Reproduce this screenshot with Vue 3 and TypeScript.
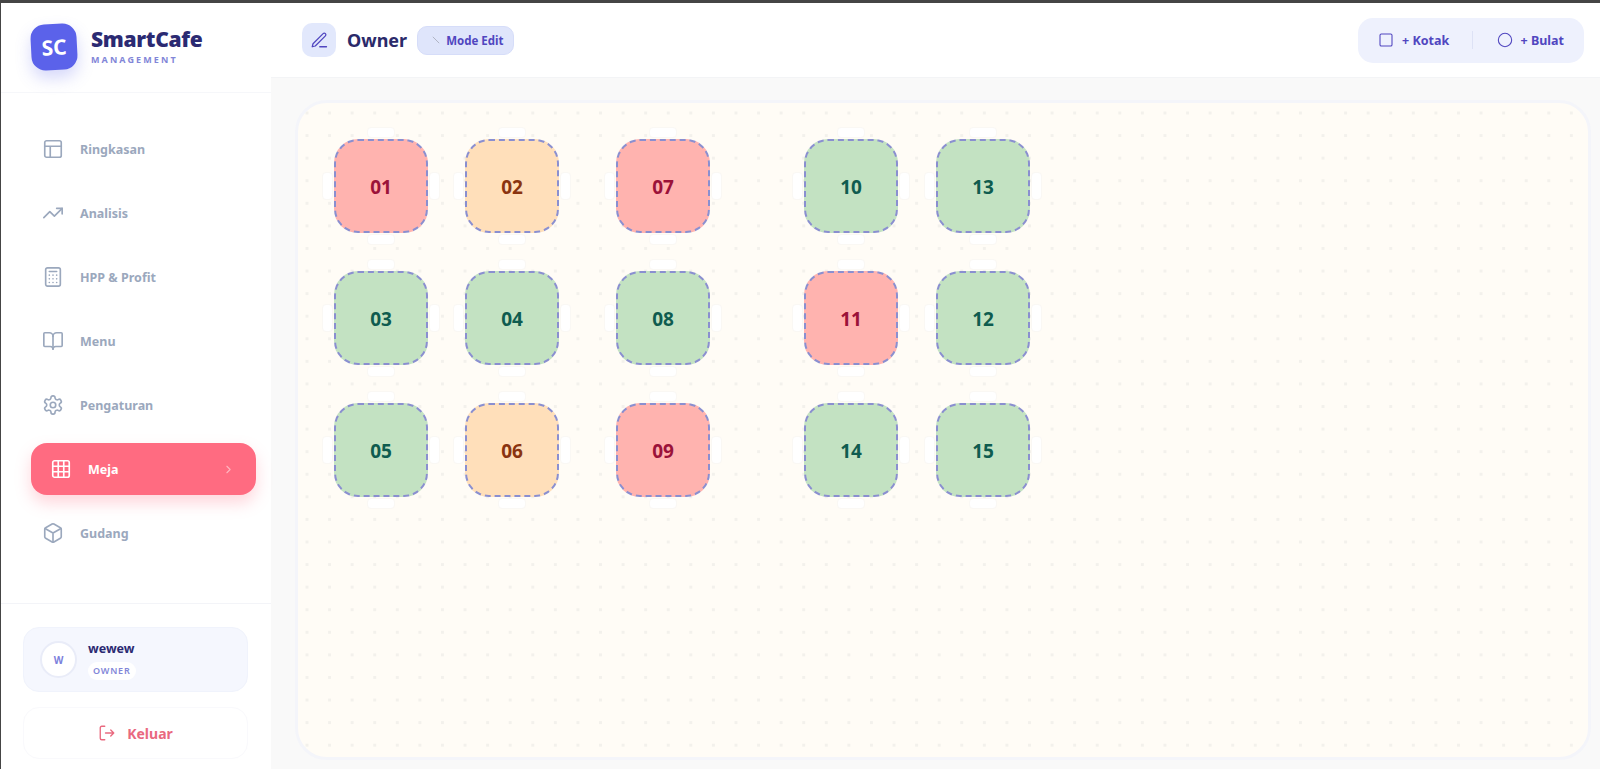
<script setup lang="ts">
type Status = 'busy' | 'held' | 'free'

interface CafeTable {
  id: string
  x: number
  y: number
  status: Status
}

const navItems = ['Ringkasan', 'Analisis', 'HPP & Profit', 'Menu', 'Pengaturan', 'Meja', 'Gudang']

const cols = [36, 167, 318, 506, 638]
const rows = [36, 168, 300]

const tables: CafeTable[] = [
  { id: '01', x: cols[0], y: rows[0], status: 'busy' },
  { id: '02', x: cols[1], y: rows[0], status: 'held' },
  { id: '07', x: cols[2], y: rows[0], status: 'busy' },
  { id: '10', x: cols[3], y: rows[0], status: 'free' },
  { id: '13', x: cols[4], y: rows[0], status: 'free' },
  { id: '03', x: cols[0], y: rows[1], status: 'free' },
  { id: '04', x: cols[1], y: rows[1], status: 'free' },
  { id: '08', x: cols[2], y: rows[1], status: 'free' },
  { id: '11', x: cols[3], y: rows[1], status: 'busy' },
  { id: '12', x: cols[4], y: rows[1], status: 'free' },
  { id: '05', x: cols[0], y: rows[2], status: 'free' },
  { id: '06', x: cols[1], y: rows[2], status: 'held' },
  { id: '09', x: cols[2], y: rows[2], status: 'busy' },
  { id: '14', x: cols[3], y: rows[2], status: 'free' },
  { id: '15', x: cols[4], y: rows[2], status: 'free' },
]
</script>

<template>
  <div class="app">
    <aside class="sidebar">
      <div class="brand">
        <div class="logo">SC</div>
        <div class="brand-text">
          <div class="brand-name">SmartCafe</div>
          <div class="brand-sub">MANAGEMENT</div>
        </div>
      </div>

      <nav class="nav">
        <a
          v-for="item in navItems"
          :key="item"
          class="nav-item"
          :class="{ active: item === 'Meja' }"
        >
          <svg class="nav-icon" viewBox="0 0 24 24">
            <template v-if="item === 'Ringkasan'">
              <rect x="3" y="3" width="18" height="18" rx="2" />
              <path d="M3 9h18M9 21V9" />
            </template>
            <template v-else-if="item === 'Analisis'">
              <path d="M22 7l-8.5 8.5-5-5L2 17" />
              <path d="M16 7h6v6" />
            </template>
            <template v-else-if="item === 'HPP & Profit'">
              <rect x="4" y="2" width="16" height="20" rx="2" />
              <path d="M8 6h8M8 10h.01M12 10h.01M16 10h.01M8 14h.01M12 14h.01M16 14h.01M8 18h.01M12 18h.01M16 18h.01" />
            </template>
            <template v-else-if="item === 'Menu'">
              <path d="M12 7v14" />
              <path d="M3 18a1 1 0 0 1-1-1V4a1 1 0 0 1 1-1h5a4 4 0 0 1 4 4 4 4 0 0 1 4-4h5a1 1 0 0 1 1 1v13a1 1 0 0 1-1 1h-6a3 3 0 0 0-3 3 3 3 0 0 0-3-3z" />
            </template>
            <template v-else-if="item === 'Pengaturan'">
              <path d="M12.22 2h-.44a2 2 0 0 0-2 2v.18a2 2 0 0 1-1 1.73l-.43.25a2 2 0 0 1-2 0l-.15-.08a2 2 0 0 0-2.73.73l-.22.38a2 2 0 0 0 .73 2.73l.15.1a2 2 0 0 1 1 1.72v.51a2 2 0 0 1-1 1.74l-.15.09a2 2 0 0 0-.73 2.73l.22.38a2 2 0 0 0 2.73.73l.15-.08a2 2 0 0 1 2 0l.43.25a2 2 0 0 1 1 1.73V20a2 2 0 0 0 2 2h.44a2 2 0 0 0 2-2v-.18a2 2 0 0 1 1-1.73l.43-.25a2 2 0 0 1 2 0l.15.08a2 2 0 0 0 2.73-.73l.22-.39a2 2 0 0 0-.73-2.73l-.15-.08a2 2 0 0 1-1-1.74v-.5a2 2 0 0 1 1-1.74l.15-.09a2 2 0 0 0 .73-2.73l-.22-.38a2 2 0 0 0-2.73-.73l-.15.08a2 2 0 0 1-2 0l-.43-.25a2 2 0 0 1-1-1.73V4a2 2 0 0 0-2-2z" />
              <circle cx="12" cy="12" r="3" />
            </template>
            <template v-else-if="item === 'Meja'">
              <rect x="3" y="3" width="18" height="18" rx="2" />
              <path d="M3 9h18M3 15h18M9 3v18M15 3v18" />
            </template>
            <template v-else>
              <path d="M21 8a2 2 0 0 0-1-1.73l-7-4a2 2 0 0 0-2 0l-7 4A2 2 0 0 0 3 8v8a2 2 0 0 0 1 1.73l7 4a2 2 0 0 0 2 0l7-4A2 2 0 0 0 21 16z" />
              <path d="M3.3 7l8.7 5 8.7-5M12 22V12" />
            </template>
          </svg>
          <span>{{ item }}</span>
          <svg v-if="item === 'Meja'" class="chevron" viewBox="0 0 24 24"><path d="M9 6l6 6-6 6" /></svg>
        </a>
      </nav>

      <div class="account">
        <div class="user-card">
          <div class="avatar">W</div>
          <div>
            <div class="user-name">wewew</div>
            <span class="user-role">OWNER</span>
          </div>
        </div>
        <button class="logout">
          <svg viewBox="0 0 24 24">
            <path d="M9 3H5a2 2 0 0 0-2 2v14a2 2 0 0 0 2 2h4" />
            <path d="M10 12h11M17 8l4 4-4 4" />
          </svg>
          Keluar
        </button>
      </div>
    </aside>

    <main class="main">
      <header class="topbar">
        <div class="title-box">
          <svg viewBox="0 0 24 24">
            <path d="M13 21h9" />
            <path d="M17.5 3.5a2.1 2.1 0 0 1 3 3L7 20l-4 1 1-4z" />
          </svg>
        </div>
        <h1 class="title">Owner</h1>
        <div class="mode-badge">
          <svg viewBox="0 0 24 24"><path d="M5 5l14 14" /></svg>
          Mode Edit
        </div>
        <div class="tools">
          <button class="tool">
            <svg viewBox="0 0 24 24"><rect x="3" y="3" width="18" height="18" rx="2" /></svg>
            + Kotak
          </button>
          <span class="tool-sep"></span>
          <button class="tool">
            <svg viewBox="0 0 24 24"><circle cx="12" cy="12" r="10" /></svg>
            + Bulat
          </button>
        </div>
      </header>

      <div class="canvas-wrap">
        <section class="canvas">
          <div
            v-for="t in tables"
            :key="t.id"
            class="table"
            :class="t.status"
            :style="{ left: t.x + 'px', top: t.y + 'px' }"
          >
            <i class="chair top"></i>
            <i class="chair bottom"></i>
            <i class="chair left"></i>
            <i class="chair right"></i>
            {{ t.id }}
          </div>
        </section>
      </div>
    </main>
  </div>
</template>

<style scoped>
.app {
  display: flex;
  height: 769px;
  box-sizing: border-box;
  border-top: 3px solid #454545;
  border-left: 1px solid #454545;
  background: #f9f9f9;
  font-family: "Noto Sans", "Open Sans", sans-serif;
  overflow: hidden;
}

svg {
  fill: none;
  stroke: currentColor;
  stroke-width: 2;
  stroke-linecap: round;
  stroke-linejoin: round;
  flex: none;
}

.sidebar {
  width: 270px;
  flex: none;
  display: flex;
  flex-direction: column;
  background: #fff;
}

.brand {
  height: 90px;
  box-sizing: border-box;
  padding: 21px 0 0 30px;
  display: flex;
  gap: 14px;
  border-bottom: 1px solid #f6f7fa;
}

.logo {
  width: 46px;
  height: 46px;
  border-radius: 14px;
  background: #5b62ea;
  color: #fff;
  font-size: 21px;
  font-weight: 700;
  display: flex;
  align-items: center;
  justify-content: center;
  transform: rotate(-3deg);
  box-shadow: 0 8px 16px rgba(91, 98, 234, 0.25);
}

.brand-name {
  margin-top: 1px;
  font-size: 21px;
  line-height: 28px;
  font-weight: 900;
  letter-spacing: -0.3px;
  color: #2b2a72;
}

.brand-sub {
  margin-top: 1px;
  font-size: 9px;
  line-height: 12px;
  font-weight: 700;
  letter-spacing: 2.1px;
  color: #8286d8;
}

.nav {
  flex: 1;
  padding: 30px 15px 0 30px;
  display: flex;
  flex-direction: column;
  gap: 12px;
}

.nav-item {
  height: 52px;
  flex: none;
  display: flex;
  align-items: center;
  gap: 16px;
  padding-left: 11px;
  border-radius: 16px;
  font-size: 12.5px;
  font-weight: 700;
  color: #9ba8bd;
}

.nav-icon {
  width: 22px;
  height: 22px;
  stroke-width: 1.8;
}

.nav-item.active {
  background: #ff6b81;
  color: #fff;
  padding-left: 19px;
  gap: 16px;
  box-shadow: 0 8px 16px rgba(255, 107, 129, 0.28);
}

.chevron {
  width: 13px;
  height: 13px;
  margin-left: auto;
  margin-right: 21px;
  opacity: 0.5;
}

.account {
  padding: 23px 23px 10px 22px;
  border-top: 1px solid #f3f4f8;
  display: flex;
  flex-direction: column;
  gap: 15px;
}

.user-card {
  height: 65px;
  box-sizing: border-box;
  display: flex;
  align-items: center;
  gap: 11px;
  padding-left: 16px;
  background: #f5f7fe;
  border: 1px solid #f0f3fc;
  border-radius: 16px;
}

.avatar {
  width: 37px;
  height: 37px;
  box-sizing: border-box;
  border-radius: 50%;
  background: #fff;
  border: 2px solid #e9ecf8;
  color: #7c80dc;
  font-size: 10px;
  font-weight: 700;
  display: flex;
  align-items: center;
  justify-content: center;
}

.user-name {
  font-size: 12.5px;
  line-height: 17px;
  font-weight: 700;
  color: #2b2a72;
}

.user-role {
  display: inline-block;
  margin-top: 4px;
  padding: 0 5px;
  height: 18px;
  line-height: 18px;
  border-radius: 9px;
  background: #fff;
  font-size: 9px;
  font-weight: 600;
  letter-spacing: 0.8px;
  color: #8286d8;
}

.logout {
  height: 52px;
  display: flex;
  align-items: center;
  justify-content: center;
  gap: 11px;
  background: #fff;
  border: 1px solid #f9f9fc;
  border-radius: 16px;
  font-family: inherit;
  font-size: 14px;
  font-weight: 700;
  color: #e9697f;
}

.logout svg {
  width: 18px;
  height: 18px;
  stroke-width: 1.8;
}

.main {
  flex: 1;
  display: flex;
  flex-direction: column;
  min-width: 0;
}

.topbar {
  height: 75px;
  flex: none;
  box-sizing: border-box;
  display: flex;
  align-items: center;
  padding: 0 16px 0 31px;
  background: #fff;
  border-bottom: 1px solid #f3f4f6;
}

.title-box {
  width: 34px;
  height: 34px;
  border-radius: 10px;
  background: #e2e8fc;
  color: #5046c0;
  display: flex;
  align-items: center;
  justify-content: center;
}

.title-box svg {
  width: 18px;
  height: 18px;
  stroke-width: 1.7;
}

.title {
  margin: 0 0 0 11px;
  font-size: 18px;
  font-weight: 700;
  color: #2b2a6a;
}

.mode-badge {
  margin-left: 10px;
  height: 29px;
  box-sizing: border-box;
  padding: 0 10px 0 13px;
  display: flex;
  align-items: center;
  gap: 5px;
  border: 1px solid #d6ddf9;
  border-radius: 10px;
  background: #dfe5fb;
  font-size: 11.5px;
  font-weight: 700;
  color: #5046c0;
}

.mode-badge svg {
  width: 10px;
  height: 10px;
  color: #a6a9b8;
}

.tools {
  margin-left: auto;
  height: 45px;
  width: 226px;
  box-sizing: border-box;
  padding: 0 20px 0 20px;
  display: flex;
  align-items: center;
  justify-content: space-between;
  border-radius: 15px;
  background: #eef1fd;
}

.tool {
  display: flex;
  align-items: center;
  gap: 8px;
  padding: 0;
  border: 0;
  background: none;
  font-family: inherit;
  font-size: 12.5px;
  font-weight: 700;
  color: #5046c0;
}

.tool svg {
  width: 16px;
  height: 16px;
  stroke-width: 1.6;
}

.tool-sep {
  width: 1px;
  height: 18px;
  background: #dde2f5;
}

.canvas-wrap {
  flex: 1;
  min-height: 0;
  padding: 22px 9px 9px 24px;
}

.canvas {
  position: relative;
  height: 100%;
  box-sizing: border-box;
  border: 3px solid #f4f5fa;
  border-radius: 32px;
  background-color: #fffcf6;
  background-image: radial-gradient(circle, #f3f1ec 1.4px, transparent 1.9px);
  background-size: 22.58px 22.58px;
  background-position: -2.3px -1.3px;
}

.table {
  position: absolute;
  width: 94px;
  height: 94px;
  box-sizing: border-box;
  padding-top: 1px;
  border: 2px dashed #8a8fd0;
  border-radius: 24px;
  display: flex;
  align-items: center;
  justify-content: center;
  font-size: 19px;
  font-weight: 700;
}

.table.busy {
  background: #ffb3af;
  color: #9b1239;
}

.table.held {
  background: #ffdfba;
  color: #8a3410;
}

.table.free {
  background: #c3e2c2;
  color: #0f5c4f;
}

.chair {
  position: absolute;
  box-sizing: border-box;
  background: #fff;
  border: 1px solid #faf8f4;
  border-radius: 4px;
}

.chair.top,
.chair.bottom {
  width: 28px;
  height: 11px;
  left: 31px;
}

.chair.left,
.chair.right {
  width: 11px;
  height: 28px;
  top: 31px;
}

.chair.top { top: -14px; }
.chair.bottom { bottom: -14px; }
.chair.left { left: -14px; }
.chair.right { right: -14px; }
</style>

<style>
html,
body {
  margin: 0;
  background: #f9f9f9;
}
</style>
